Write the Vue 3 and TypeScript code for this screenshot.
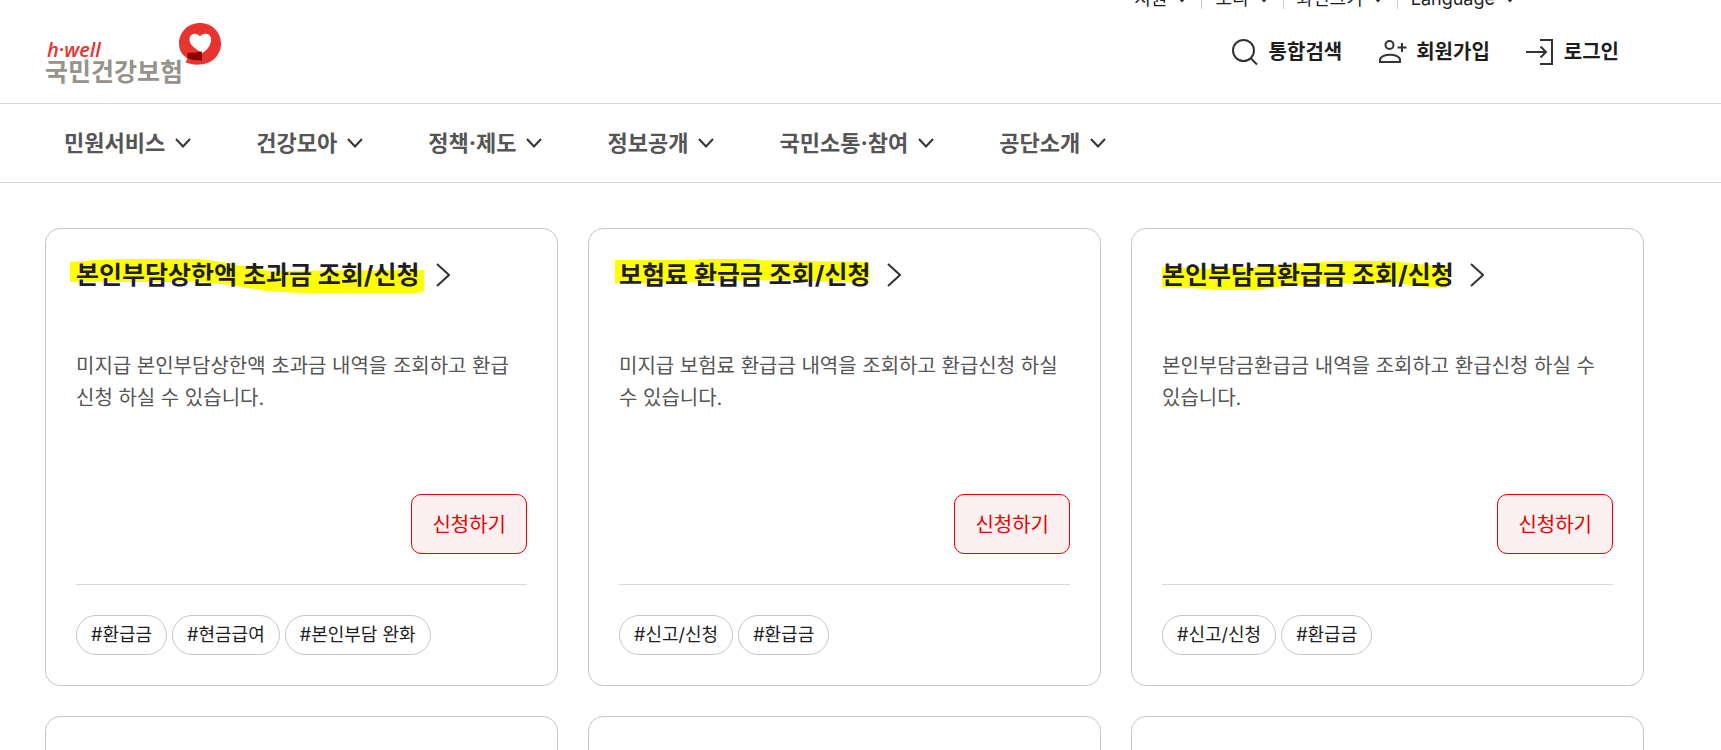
<script setup lang="ts">
interface Card { title: string; desc: string; tags: string[]; mark: string; markWidth: number }

const utilities: string[] = ['지원', '소리', '화면크기', 'Language']
const menus: string[] = ['민원서비스', '건강모아', '정책·제도', '정보공개', '국민소통·참여', '공단소개']
const cards: Card[] = [
  {
    title: '본인부담상한액 초과금 조회/신청',
    desc: '미지급 본인부담상한액 초과금 내역을 조회하고 환급신청 하실 수 있습니다.',
    tags: ['#환급금', '#현금급여', '#본인부담 완화'],
    mark: 'M0 5L28 3L52 2L130 2L152 5L172 9L200 14L354 13L354 34L348 36L230 36L196 34L160 28L130 25L0 25Z',
    markWidth: 354,
  },
  {
    title: '보험료 환급금 조회/신청',
    desc: '미지급 보험료 환급금 내역을 조회하고 환급신청 하실 수 있습니다.',
    tags: ['#신고/신청', '#환급금'],
    mark: 'M2 3L85 3L85 2L142 2L142 3L192 4L256 5L256 26L227 25L172 23L112 24L62 26L2 26Z',
    markWidth: 256,
  },
  {
    title: '본인부담금환급금 조회/신청',
    desc: '본인부담금환급금 내역을 조회하고 환급신청 하실 수 있습니다.',
    tags: ['#신고/신청', '#환급금'],
    mark: 'M6 10L60 12L100 10L155 6L184 4L238 4L260 7L291 9L291 31L270 30L240 26L180 26L130 29L98 33L60 33L36 31L6 30Z',
    markWidth: 291,
  },
]
</script>

<template>
  <div class="page">
    <header class="header">
      <div class="inner header-inner">
        <a class="logo" href="#" aria-label="h·well 국민건강보험">
          <span class="logo-text">
            <span class="logo-en">h·well</span>
            <span class="logo-ko">국민건강보험</span>
          </span>
          <svg class="logo-mark" viewBox="0 0 44 44" aria-hidden="true">
            <path d="M22 1C34 1 43 10 43 21.500C43 33 34 42 22 42.500C17 43 12 42 7.500 40.500L9.500 36.500C4 33 1 28 1 21.500C1 10 10 1 22 1Z" fill="#e8332e" />
            <path d="M22 29.500C16 26 11 22 11.500 17C12 11.500 19 10 22 14.500C25 10 33 11.500 33 17C33.500 23 29 28 24 31.500Z" fill="#fff" />
            <path d="M9.500 31Q16 31 24 29.500L24 38.500Q16 39 9.500 36.500Z" fill="#8e0008" />
          </svg>
        </a>
        <div class="tools">
          <ul class="utilities">
            <li v-for="item in utilities" :key="item">
              <button type="button">
                {{ item }}
                <svg class="mini-chevron" viewBox="0 0 10 8" aria-hidden="true"><path d="M1 2L5 6L9 2" /></svg>
              </button>
            </li>
          </ul>
          <div class="actions">
            <a href="#">
              <svg class="icon" viewBox="0 0 28 28" aria-hidden="true"><circle cx="12.500" cy="12.500" r="10.500" /><path d="M19.500 20L26 26.500" /></svg>
              통합검색
            </a>
            <a href="#">
              <svg class="icon" viewBox="0 0 28 28" aria-hidden="true"><circle cx="11.500" cy="7" r="4" /><path d="M2 24V22C2 15 22 15 22 22V24ZM24 5V14M19.500 9.500H28.500" /></svg>
              회원가입
            </a>
            <a href="#">
              <svg class="icon" viewBox="0 0 28 28" aria-hidden="true"><path d="M14 2H26V26H14M0 14H20M14.500 8.500L20 14L14.500 19.500" /></svg>
              로그인
            </a>
          </div>
        </div>
      </div>
    </header>

    <nav class="nav">
      <ul class="inner menu">
        <li v-for="menu in menus" :key="menu">
          <button type="button">
            <span class="menu-label">{{ menu }}</span>
            <svg class="chevron" viewBox="0 0 16 10" aria-hidden="true"><path d="M1 1L8 8.500L15 1" /></svg>
          </button>
        </li>
      </ul>
    </nav>

    <main class="inner grid">
      <article v-for="card in cards" :key="card.title" class="card">
        <h2>
          <a href="#">
            <span class="title">
              <svg class="mark" :width="card.markWidth" height="38" aria-hidden="true"><path :d="card.mark" fill="#ff0" /></svg>
              <span class="title-text">{{ card.title }}</span>
            </span>
            <svg class="arrow" viewBox="0 0 14 24" aria-hidden="true"><path d="M1 1L13 12L1 23" /></svg>
          </a>
        </h2>
        <p>{{ card.desc }}</p>
        <button type="button" class="apply">신청하기</button>
        <ul class="tags">
          <li v-for="tag in card.tags" :key="tag">{{ tag }}</li>
        </ul>
      </article>
      <article v-for="n in 3" :key="n" class="card"></article>
    </main>
  </div>
</template>

<style>
body {
  margin: 0;
  background: #fff;
}
</style>

<style scoped>
.page {
  height: 100vh;
  overflow: hidden;
  color: #1e1e1e;
  font-family: Inter, "Noto Sans CJK KR", sans-serif;
}
ul {
  list-style: none;
  margin: 0;
  padding: 0;
}
a {
  color: inherit;
  text-decoration: none;
}
button {
  font: inherit;
  color: inherit;
  background: none;
  border: 0;
  padding: 0;
  cursor: pointer;
}
svg {
  flex: none;
}
.inner {
  max-width: 1600px;
  margin: 0 77px 0 45px;
}
.header {
  border-bottom: 1px solid #d8d8d8;
}
.header-inner {
  display: flex;
  justify-content: space-between;
  height: 103px;
}
.logo {
  display: flex;
  align-self: flex-start;
  padding-top: 22px;
}
.logo-text {
  display: flex;
  flex-direction: column;
  padding-top: 18px;
}
.logo-en {
  padding-left: 2px;
  color: #e8332e;
  font: italic 600 20px/20px "Open Sans", sans-serif;
}
.logo-ko {
  color: #96938a;
  font-size: 25px;
  font-weight: 700;
  line-height: 24px;
}
.logo-mark {
  width: 44px;
  height: 44px;
  margin-left: -5px;
}
.tools {
  display: flex;
  flex-direction: column;
  align-items: flex-end;
}
.utilities {
  display: flex;
  margin-top: -13px;
  margin-right: 129px;
  font-size: 18px;
  line-height: 24px;
}
.utilities li {
  height: 22px;
}
.utilities li + li {
  margin-left: 14px;
  padding-left: 13px;
  border-left: 1px solid #ccc;
}
.utilities button {
  display: flex;
  align-items: center;
  gap: 10px;
}
.mini-chevron {
  width: 10px;
  height: 8px;
}
.mini-chevron path,
.chevron path,
.icon path,
.icon circle,
.arrow path {
  fill: none;
  stroke: #333;
  stroke-width: 2;
}
.actions {
  display: flex;
  gap: 36px;
  margin-top: 28px;
  margin-right: 25px;
}
.actions a {
  display: flex;
  align-items: center;
  gap: 10px;
  font-size: 20px;
  font-weight: 700;
  line-height: 30px;
}
.icon {
  width: 28px;
  height: 28px;
  overflow: visible;
}
.nav {
  border-bottom: 1px solid #d8d8d8;
}
.menu {
  display: flex;
  gap: 65px;
  padding-left: 19px;
  height: 78px;
  color: #555;
  font-size: 22px;
  font-weight: 700;
}
.menu button {
  display: flex;
  align-items: center;
  gap: 10px;
  height: 78px;
}
.menu-label {
  padding-bottom: 4px;
}
.chevron {
  width: 16px;
  height: 10px;
}
.grid {
  display: grid;
  grid-template-columns: repeat(3, 1fr);
  gap: 30px;
  padding-top: 45px;
}
.card {
  display: flex;
  flex-direction: column;
  box-sizing: border-box;
  min-height: 458px;
  padding: 30px;
  border: 1px solid #c6c6c6;
  border-radius: 15px;
}
h2 {
  margin: 0;
  font-size: 25px;
  font-weight: 700;
  line-height: 32px;
}
h2 a {
  display: flex;
  align-items: center;
  gap: 16px;
}
.title {
  position: relative;
}
.title-text {
  position: relative;
}
.mark {
  position: absolute;
  left: -6px;
  top: -2px;
}
.arrow {
  width: 14px;
  height: 24px;
}
.card p {
  height: 64px;
  margin: 59px 0 0;
  color: #555;
  font-size: 20px;
  line-height: 32px;
}
.apply {
  align-self: flex-end;
  height: 60px;
  margin-top: 80px;
  padding: 0 20px 2px;
  border: 1px solid #eb0000;
  border-radius: 10px;
  background: #fdf0f0;
  color: #eb0000;
  font-size: 20px;
}
.tags {
  display: flex;
  gap: 5px;
  margin-top: 30px;
  padding-top: 30px;
  border-top: 1px solid #d8d8d8;
}
.tags li {
  padding: 0 14px;
  border: 1px solid #c6c6c6;
  border-radius: 20px;
  font-size: 18px;
  line-height: 38px;
}
</style>
